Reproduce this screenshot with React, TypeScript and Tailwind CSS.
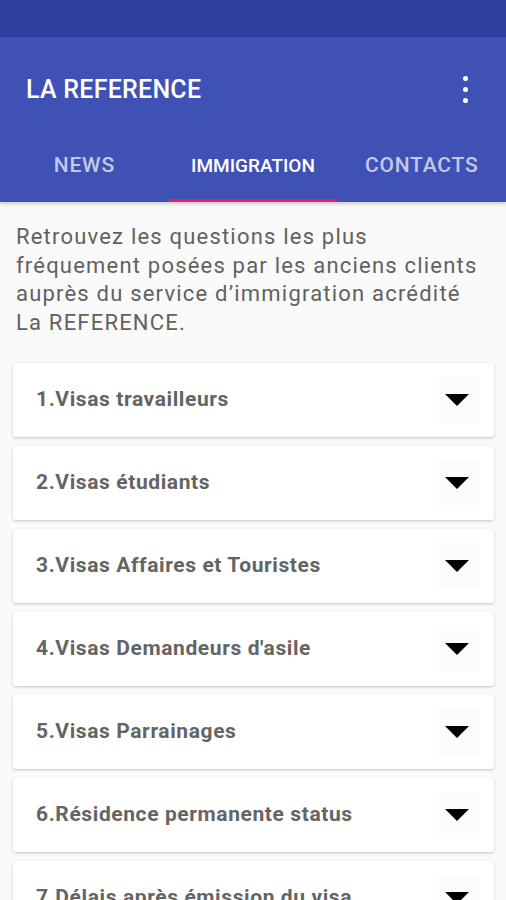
import React from 'react';

const items = [
  '1.Visas travailleurs',
  '2.Visas étudiants',
  '3.Visas Affaires et Touristes',
  '4.Visas Demandeurs d\'asile',
  '5.Visas Parrainages',
  '6.Résidence permanente status',
  '7.Délais après émission du visa',
];

const tabs = ['NEWS', 'IMMIGRATION', 'CONTACTS'];

const FaqCard: React.FC<{ title: string }> = ({ title }) => (
  <div className="flex h-[74px] items-center justify-between rounded-[3px] bg-white pl-[23px] pr-[14px] shadow-[0_1px_3px_rgba(0,0,0,0.22)]">
    <span className="text-[21px] font-bold tracking-[0.6px] text-[#646464]">{title}</span>
    <div className="flex h-[46px] w-[46px] items-center justify-center bg-[#fcfcfc]">
      <svg width="24" height="12" viewBox="0 0 24 12">
        <path d="M0 0 L24 0 L12 12 Z" fill="#000" />
      </svg>
    </div>
  </div>
);

export default function App() {
  return (
    <div className="h-[900px] overflow-hidden bg-[#fafafa] font-['Roboto',sans-serif]">
      <div className="h-[37px] bg-[#303f9f]" />
      <header className="bg-[#3f51b5] shadow-[0_2px_4px_rgba(0,0,0,0.2)]">
        <div className="flex h-[101px] items-center justify-between pl-[26px] pr-[38px] pt-[4px]">
          <h1 className="text-[25px] font-medium tracking-[0.25px] text-white">LA REFERENCE</h1>
          <div className="flex flex-col gap-[6px]">
            <span className="h-[5px] w-[5px] rounded-full bg-white" />
            <span className="h-[5px] w-[5px] rounded-full bg-white" />
            <span className="h-[5px] w-[5px] rounded-full bg-white" />
          </div>
        </div>
        <nav className="grid h-[64px] grid-cols-3">
          {tabs.map((t, i) => (
            <div key={t} className="relative flex items-center justify-center pb-[8px]">
              <span
                className={
                  i === 1
                    ? 'text-[19px] font-medium text-white'
                    : 'text-[21px] font-medium tracking-[0.8px] text-white/70'
                }
              >
                {t}
              </span>
              {i === 1 && <span className="absolute bottom-0 left-0 right-0 h-[3px] bg-[#e91e63]" />}
            </div>
          ))}
        </nav>
      </header>
      <p className="px-4 pt-[21px] text-[22px] leading-[28.5px] tracking-[1.2px] text-[#616161]">
        Retrouvez les questions les plus fréquement posées par les anciens clients auprès du service d’immigration acrédité La REFERENCE.
      </p>
      <div className="mt-[26px] flex flex-col gap-[9px] pl-[13px] pr-[12px]">
        {items.map((t) => (
          <FaqCard key={t} title={t} />
        ))}
      </div>
    </div>
  );
}
